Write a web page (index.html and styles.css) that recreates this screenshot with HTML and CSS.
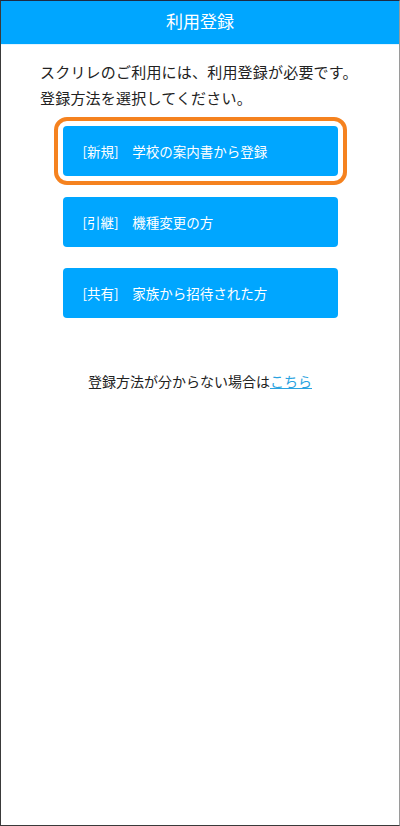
FILE: index.html
```html
<!DOCTYPE html>
<html lang="ja">
<head>
<meta charset="utf-8">
<title>利用登録</title>
<link rel="stylesheet" href="styles.css">
</head>
<body>
<div class="frame">
  <header class="header">利用登録</header>
  <main class="content">
    <p class="intro">スクリレのご利用には、利用登録が必要です。<br>登録方法を選択してください。</p>
    <nav class="options">
      <a class="option option-highlight" href="#">[新規]　学校の案内書から登録</a>
      <a class="option" href="#">[引継]　機種変更の方</a>
      <a class="option" href="#">[共有]　家族から招待された方</a>
    </nav>
    <p class="help">登録方法が分からない場合は<a class="help-link" href="#">こちら</a></p>
  </main>
</div>
</body>
</html>
```
FILE: styles.css
```css
html, body {
  margin: 0;
  padding: 0;
  background: #fff;
}
body {
  font-family: "Noto Sans CJK JP", "Noto Sans", sans-serif;
  color: #222;
}
.frame {
  box-sizing: border-box;
  width: 400px;
  height: 826px;
  border: 1px solid #3a3a3a;
  border-top-color: #1c2a44;
  border-right-color: #9a9a9a;
  background: #fff;
  display: flex;
  flex-direction: column;
}
.header {
  height: 43px;
  background: #00a6ff;
  color: #fff;
  font-size: 17px;
  line-height: 40px;
  text-align: center;
  border-bottom: 1px solid #e3f4ff;
}
.content {
  padding: 14px 0 0;
  display: flex;
  flex-direction: column;
}
.intro {
  margin: 0;
  padding: 0 20px 0 39px;
  font-size: 15px;
  line-height: 26px;
  letter-spacing: 0.2px;
}
.options {
  margin-top: 15px;
  display: flex;
  flex-direction: column;
  align-items: center;
  gap: 21px;
}
.option {
  box-sizing: border-box;
  width: 275px;
  height: 50px;
  background: #00a6ff;
  border-radius: 4px;
  color: #fff;
  text-decoration: none;
  font-size: 13.5px;
  display: flex;
  align-items: center;
  padding-left: 20px;
  padding-bottom: 1px;
}
.option-highlight {
  outline: 4px solid #f5821f;
  outline-offset: 5px;
}
.help {
  margin: 53px 0 0;
  font-size: 14px;
  line-height: 20px;
  text-align: center;
}
.help-link {
  color: #2aa3e0;
  text-decoration: underline;
}
```
